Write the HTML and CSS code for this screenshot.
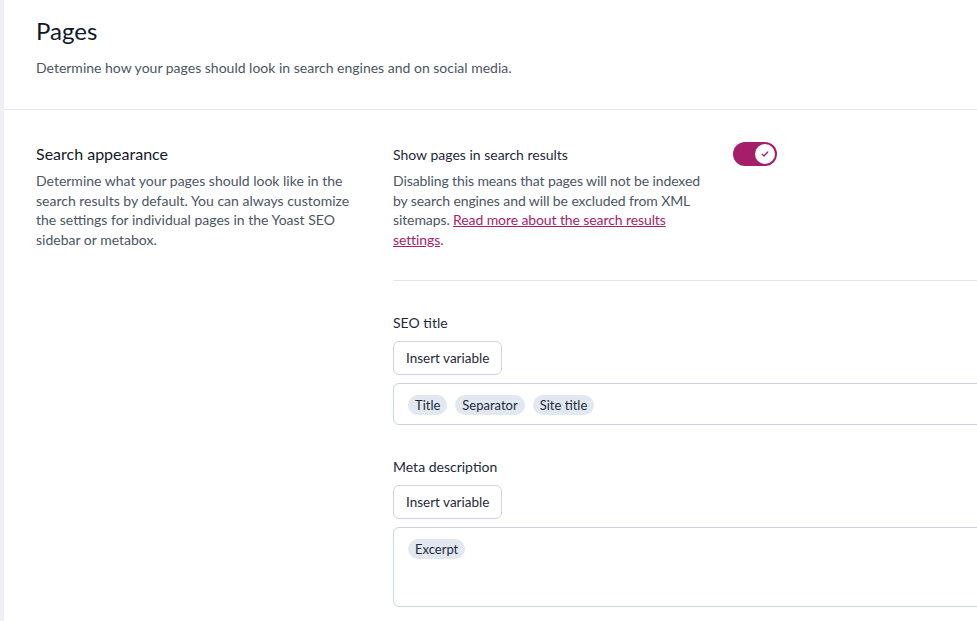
FILE: index.html
```html
<!DOCTYPE html>
<html lang="en">
<head>
<meta charset="utf-8">
<title>Pages</title>
<link rel="stylesheet" href="styles.css">
</head>
<body>
<div class="app">
  <div class="strip"></div>
  <main class="main">
    <header class="page-header">
      <h1 class="page-title">Pages</h1>
      <p class="page-desc">Determine how your pages should look in search engines and on social media.</p>
    </header>
    <section class="section">
      <div class="section-info">
        <h2 class="section-title">Search appearance</h2>
        <p class="section-desc">Determine what your pages should look like in the search results by default. You can always customize the settings for individual pages in the Yoast SEO sidebar or metabox.</p>
      </div>
      <div class="section-fields">
        <div class="toggle-field">
          <div class="toggle-text">
            <div class="field-label">Show pages in search results</div>
            <p class="field-desc">Disabling this means that pages will not be indexed by search engines and will be excluded from XML sitemaps. <a href="#" class="link">Read more about the search results settings</a>.</p>
          </div>
          <button class="toggle" type="button" aria-pressed="true">
            <span class="knob">
              <svg viewBox="0 0 20 20" width="10" height="10"><path d="M4.5 10.5l3.5 3.5 7.5-8" fill="none" stroke="#a61e69" stroke-width="2.6" stroke-linecap="round" stroke-linejoin="round"/></svg>
            </span>
          </button>
        </div>
        <hr class="divider">
        <div class="field">
          <div class="label">SEO title</div>
          <button class="btn" type="button">Insert variable</button>
          <div class="editor">
            <span class="pill">Title</span>
            <span class="pill">Separator</span>
            <span class="pill">Site title</span>
          </div>
        </div>
        <div class="field field-gap">
          <div class="label">Meta description</div>
          <button class="btn" type="button">Insert variable</button>
          <div class="editor editor-tall">
            <span class="pill">Excerpt</span>
          </div>
        </div>
      </div>
    </section>
  </main>
</div>
</body>
</html>
```
FILE: styles.css
```css
* { box-sizing: border-box; }
html, body { margin: 0; padding: 0; }
body {
  background: #ffffff;
  font-family: "Lato", "Open Sans", "Liberation Sans", sans-serif;
  color: #1e293b;
  overflow: hidden;
  width: 977px;
  height: 621px;
}
.app { display: flex; height: 621px; }
.strip { width: 4px; flex: 0 0 4px; background: #eef0f4; }
.main { flex: 0 0 1100px; width: 1100px; }
.page-header {
  padding: 15px 32px 31px;
  border-bottom: 1px solid #e5e7eb;
}
.page-title {
  margin: 0;
  font-size: 24px;
  line-height: 32px;
  font-weight: 400;
  color: #111827;
}
.page-desc {
  margin: 11px 0 0;
  font-size: 14px;
  line-height: 20px;
  color: #4b5563;
}
.section {
  display: grid;
  grid-template-columns: 325px 682px;
  column-gap: 32px;
  padding: 32px 32px;
}
.section-title {
  margin: 0;
  font-size: 16px;
  line-height: 24px;
  font-weight: 400;
  color: #111827;
}
.section-desc {
  margin: 5px 0 0;
  font-size: 14px;
  line-height: 19.7px;
  color: #4b5563;
}
.toggle-field {
  display: flex;
  justify-content: space-between;
  align-items: flex-start;
  gap: 14px;
  max-width: 384px;
}
.toggle-text { flex: 0 1 310px; }
.field-label {
  font-size: 14px;
  line-height: 24px;
  margin-top: 1px;
  color: #1e293b;
}
.field-desc {
  margin: 4px 0 0;
  font-size: 14px;
  line-height: 19.6px;
  letter-spacing: -0.1px;
  color: #4b5563;
}
.link { color: #a61e69; text-decoration: underline; }
.toggle {
  position: relative;
  width: 44px;
  height: 24px;
  border: none;
  border-radius: 12px;
  background: #a61e69;
  padding: 0;
  flex: 0 0 44px;
  cursor: pointer;
}
.knob {
  position: absolute;
  top: 2px;
  right: 2px;
  width: 20px;
  height: 20px;
  border-radius: 50%;
  background: #ffffff;
  display: flex;
  align-items: center;
  justify-content: center;
}
.divider {
  border: 0;
  border-top: 1px solid #e5e7eb;
  margin: 31px 0 32px;
}
.field { display: flex; flex-direction: column; align-items: flex-start; }
.field-gap { margin-top: 32px; }
.label {
  font-size: 14px;
  line-height: 20px;
  color: #1e293b;
}
.btn {
  margin-top: 8px;
  height: 34px;
  padding: 0 12px;
  border: 1px solid #d1d5db;
  border-radius: 6px;
  background: #ffffff;
  font-family: inherit;
  font-size: 13.5px;
  color: #1f2937;
}
.editor {
  margin-top: 8px;
  width: 640px;
  height: 42px;
  border: 1px solid #cbd5e1;
  border-radius: 6px;
  padding: 11px 14px;
  display: flex;
  align-items: flex-start;
  gap: 8px;
}
.editor-tall { height: 80px; }
.pill {
  display: inline-block;
  height: 20px;
  line-height: 20px;
  padding: 0 7px;
  border-radius: 10px;
  background: #e2e8f0;
  font-size: 13px;
  color: #1e293b;
}
```
